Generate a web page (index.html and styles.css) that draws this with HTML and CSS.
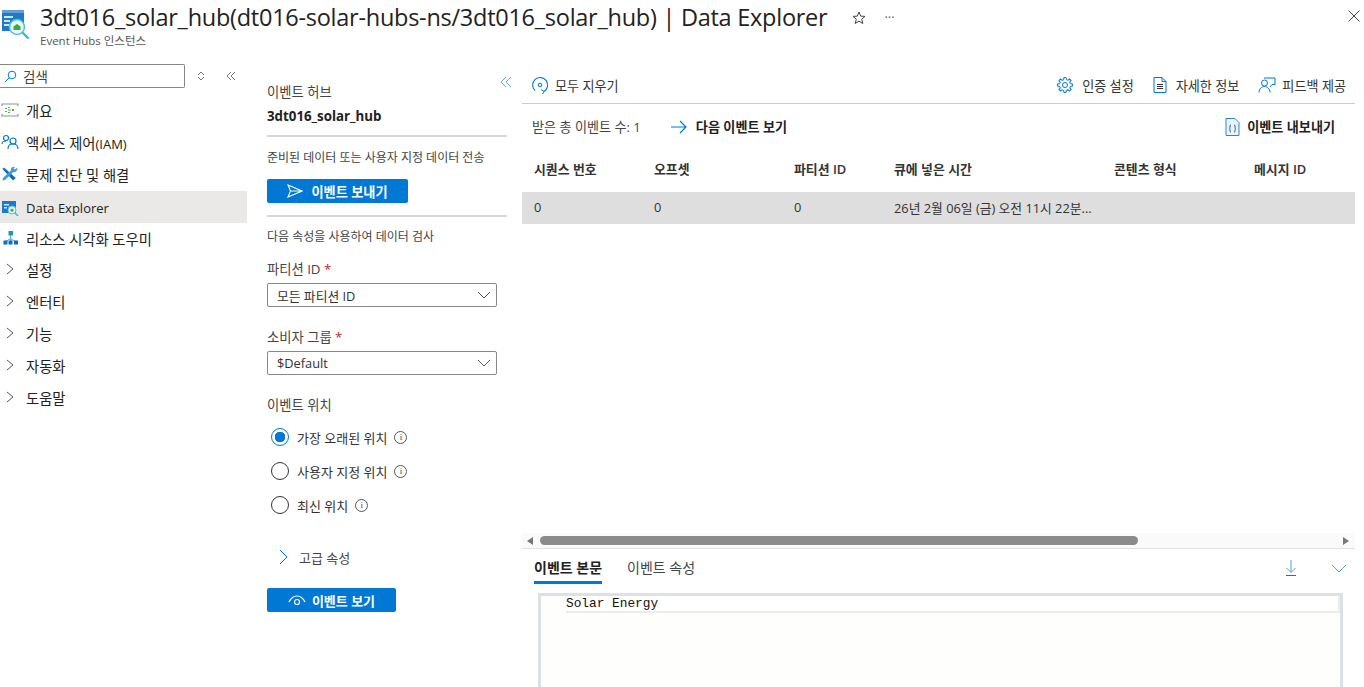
FILE: index.html
```html
<!DOCTYPE html>
<html lang="ko">
<head>
<meta charset="utf-8">
<title>Data Explorer</title>
<link rel="stylesheet" href="styles.css">
</head>
<body>
<div class="app">
  <header class="top">
    <svg class="logo" width="30" height="34" viewBox="0 0 30 34">
      <rect x="2" y="4" width="22" height="21" fill="#1f78c8"/>
      <rect x="2" y="4" width="22" height="3" fill="#5ea0d8"/>
      <rect x="4" y="10" width="9" height="2" fill="#cfe6f8"/>
      <rect x="4" y="14" width="6" height="2" fill="#cfe6f8"/>
      <rect x="4" y="18" width="6" height="2" fill="#cfe6f8"/>
      <circle cx="17" cy="21" r="7.500" fill="#e9f6fb" stroke="#50c0e0" stroke-width="1.500"/>
      <path d="M13.500 24v-3.500l3.500-2.500 3.500 2.500V24z" fill="#3fa83f"/>
      <path d="M22.500 26.500l6 6" stroke="#38b5d8" stroke-width="2.400"/>
    </svg>
    <div class="titles">
      <h1 class="title">3dt016_solar_hub(dt016-solar-hubs-ns/3dt016_solar_hub) | Data Explorer</h1>
      <div class="subtitle">Event Hubs 인스턴스</div>
    </div>
    <svg class="star" width="14" height="14" viewBox="0 0 14 14"><path d="M7 1l1.700 4.100 4.300.3-3.300 2.800 1.100 4.300L7 10.200l-3.800 2.300 1.100-4.300L1 5.400l4.300-.3z" fill="none" stroke="#444" stroke-width="1"/></svg>
    <div class="more">···</div>
    <svg class="close" width="14" height="14" viewBox="0 0 14 14"><path d="M1.500 1.500l11 11M12.500 1.500l-11 11" stroke="#444" stroke-width="1"/></svg>
  </header>
  <div class="body">
    <nav class="side">
      <div class="searchrow">
        <div class="search">
          <svg width="13" height="13" viewBox="0 0 13 13"><circle cx="8" cy="5" r="3.800" fill="none" stroke="#0078d4"/><path d="M5.200 7.800L1 12" stroke="#0078d4"/></svg>
          <span>검색</span>
        </div>
        <svg class="updown" width="8" height="10" viewBox="0 0 8 10"><path d="M1 4l3-3 3 3M1 6l3 3 3-3" fill="none" stroke="#777"/></svg>
        <svg class="coll" width="10" height="10" viewBox="0 0 10 10"><path d="M5 1L1 5l4 4M9 1L5 5l4 4" fill="none" stroke="#777"/></svg>
      </div>
      <ul class="menu">
        <li class="item"><svg class="ico" width="18" height="14" viewBox="0 0 18 14"><path d="M1 3V1h16v2M1 11v2h16v-2" fill="none" stroke="#8a9a8a" stroke-width="1.200"/><path d="M4 5h2v1H4zM4 8h2v1H4zM7 4h2v1H7zM7 6.500h3v1H7zM7 9h2v1H7zM11 6h2v2h-2z" fill="#5db04a"/></svg><span>개요</span></li>
        <li class="item"><svg class="ico" width="18" height="16" viewBox="0 0 18 16"><circle cx="5" cy="4" r="2.500" fill="none" stroke="#0078d4" stroke-width="1.200"/><path d="M1 10c0-2 2-3 4-3" fill="none" stroke="#0078d4" stroke-width="1.200"/><circle cx="12" cy="7" r="3" fill="none" stroke="#0078d4" stroke-width="1.200"/><path d="M7 15c0-3 2-5 5-5s5 2 5 5" fill="none" stroke="#0078d4" stroke-width="1.200"/></svg><span>액세스 제어<small class="lat">(IAM)</small></span></li>
        <li class="item"><svg class="ico" width="18" height="16" viewBox="0 0 18 16"><path d="M3 1.500L1.500 3l10.500 11.500 2.800-2.500z" fill="#0a6fb8"/><path d="M16.500 1.500l-2.500 2-1.500-1L14 .8c-2.500-.6-4.500 1-4 3.500L2 12l-.5 2.500 2.500-.5 8-7.800c2.500.5 4.500-1.700 4.500-4.700z" fill="#3d9bd6"/></svg><span>문제 진단 및 해결</span></li>
        <li class="item active"><svg class="ico" width="18" height="16" viewBox="0 0 18 16"><rect x="1" y="1" width="14" height="12" fill="#1f78c8"/><rect x="3" y="4" width="5" height="1.500" fill="#cfe6f8"/><rect x="3" y="7" width="3" height="1.500" fill="#cfe6f8"/><circle cx="11" cy="10" r="4" fill="#e9f6fb" stroke="#50c0e0"/><path d="M9.500 11.500v-2l1.500-1 1.500 1v2z" fill="#3fa83f"/><path d="M14 13l3 3" stroke="#38b5d8" stroke-width="1.400"/></svg><span class="lat">Data Explorer</span></li>
        <li class="item"><svg class="ico" width="18" height="16" viewBox="0 0 18 16"><path d="M9.500 4v7M4 12l5.500-3.500L15 12" fill="none" stroke="#5ea0d8"/><rect x="7.500" y="1" width="4.500" height="4.500" fill="#1d9aa6"/><rect x="2.500" y="10.500" width="4" height="4" fill="#0a6fb8"/><rect x="7.500" y="10.500" width="4" height="4" fill="#0a6fb8"/><rect x="13" y="10.500" width="4" height="4" fill="#0a6fb8"/></svg><span>리소스 시각화 도우미</span></li>
        <li class="item group first"><svg class="chev" width="8" height="12" viewBox="0 0 8 12"><path d="M1 1l6 5-6 5" fill="none" stroke="#555"/></svg><span>설정</span></li>
        <li class="item group"><svg class="chev" width="8" height="12" viewBox="0 0 8 12"><path d="M1 1l6 5-6 5" fill="none" stroke="#555"/></svg><span>엔터티</span></li>
        <li class="item group"><svg class="chev" width="8" height="12" viewBox="0 0 8 12"><path d="M1 1l6 5-6 5" fill="none" stroke="#555"/></svg><span>기능</span></li>
        <li class="item group"><svg class="chev" width="8" height="12" viewBox="0 0 8 12"><path d="M1 1l6 5-6 5" fill="none" stroke="#555"/></svg><span>자동화</span></li>
        <li class="item group"><svg class="chev" width="8" height="12" viewBox="0 0 8 12"><path d="M1 1l6 5-6 5" fill="none" stroke="#555"/></svg><span>도움말</span></li>
      </ul>
    </nav>
    <section class="panel">
      <svg class="panelcoll" width="12" height="12" viewBox="0 0 12 12"><path d="M6 1L1 6l5 5M11 1L6 6l5 5" fill="none" stroke="#62aee8"/></svg>
      <div class="lbl hub">이벤트 허브</div>
      <div class="hubname">3dt016_solar_hub</div>
      <div class="rule"></div>
      <div class="lbl desc">준비된 데이터 또는 사용자 지정 데이터 전송</div>
      <button class="btn send"><svg width="16" height="14" viewBox="0 0 16 14"><path d="M1 1l14 6-14 6 2.500-6zM3.500 7H15" fill="none" stroke="#fff" stroke-width="1.100"/></svg><span>이벤트 보내기</span></button>
      <div class="rule rule2"></div>
      <div class="lbl desc2">다음 속성을 사용하여 데이터 검사</div>
      <div class="lbl field">파티션 ID <em>*</em></div>
      <div class="select"><span>모든 파티션 ID</span><svg width="14" height="8" viewBox="0 0 14 8"><path d="M1 1l6 6 6-6" fill="none" stroke="#555"/></svg></div>
      <div class="lbl field f2">소비자 그룹 <em>*</em></div>
      <div class="select s2"><span>$Default</span><svg width="14" height="8" viewBox="0 0 14 8"><path d="M1 1l6 6 6-6" fill="none" stroke="#555"/></svg></div>
      <div class="lbl field f3">이벤트 위치</div>
      <div class="radios">
        <div class="radio"><i class="dot on"></i><span>가장 오래된 위치</span><i class="inf">i</i></div>
        <div class="radio"><i class="dot"></i><span>사용자 지정 위치</span><i class="inf">i</i></div>
        <div class="radio"><i class="dot"></i><span>최신 위치</span><i class="inf">i</i></div>
      </div>
      <div class="adv"><svg width="10" height="16" viewBox="0 0 10 16"><path d="M1 1l7 7-7 7" fill="none" stroke="#0078d4"/></svg><span>고급 속성</span></div>
      <button class="btn view"><svg width="18" height="11" viewBox="0 0 18 11"><path d="M1 7c2-4 5-6 8-6s6 2 8 6" fill="none" stroke="#fff" stroke-width="1.200"/><circle cx="9" cy="7" r="2.500" fill="none" stroke="#fff" stroke-width="1.200"/></svg><span>이벤트 보기</span></button>
    </section>
    <main class="main">
      <div class="toolbar">
        <div class="tool clear"><svg width="18" height="18" viewBox="0 0 18 18"><path d="M4 14.500A7.500 7.500 0 1 1 13 15.500" fill="none" stroke="#0078d4" stroke-width="1.100"/><circle cx="9" cy="9" r="1.800" fill="none" stroke="#0078d4"/><path d="M10 13.500l3 2-1.500 2.500" fill="none" stroke="#0078d4"/></svg><span>모두 지우기</span></div>
        <div class="tools">
          <div class="tool"><svg width="16" height="16" viewBox="-8 -8 16 16"><defs><path id="cog" d="M5.340-1.330L7.410-1.170V1.170L5.340 1.330A5.500 5.500 0 0 1 4.710 2.830" fill="none" stroke="#0078d4"/></defs><use href="#cog"/><use href="#cog" transform="rotate(45)"/><use href="#cog" transform="rotate(90)"/><use href="#cog" transform="rotate(135)"/><use href="#cog" transform="rotate(180)"/><use href="#cog" transform="rotate(225)"/><use href="#cog" transform="rotate(270)"/><use href="#cog" transform="rotate(315)"/><circle r="2.500" fill="none" stroke="#0078d4"/></svg><span>인증 설정</span></div>
          <div class="tool"><svg width="14" height="16" viewBox="0 0 14 16"><path d="M1 .5h8l4 4v11H1z" fill="none" stroke="#0078d4"/><path d="M9 .5v4h4" fill="none" stroke="#0078d4"/><path d="M4 7.500h6M4 9.500h6M4 11.500h6" stroke="#333"/></svg><span>자세한 정보</span></div>
          <div class="tool fb"><svg width="18" height="16" viewBox="0 0 18 16"><circle cx="6.500" cy="6" r="3" fill="none" stroke="#0078d4"/><path d="M1 15.500c0-3.500 2.500-6 5.500-6s5.500 2.500 5.500 6" fill="none" stroke="#0078d4"/><path d="M6 1h11v6.500h-3L12 10" fill="none" stroke="#0078d4"/></svg><span>피드백 제공</span></div>
        </div>
      </div>
      <div class="status">
        <span class="count">받은 총 이벤트 수: 1</span>
        <div class="next"><svg width="18" height="14" viewBox="0 0 18 14"><path d="M1 7h15M10 1l6 6-6 6" fill="none" stroke="#0078d4" stroke-width="1.200"/></svg><b>다음 이벤트 보기</b></div>
        <div class="export"><svg width="15" height="18" viewBox="0 0 15 18"><path d="M1 .5h9l4 4v13H1z" fill="#eaf4fc" stroke="#2b88d8"/><path d="M6 7c-1.500 0-1 2-1 2.500S4.500 11 4.500 11s.5.500.5 1.500 0 1.500 1 1.500M9 7c1.500 0 1 2 1 2.500s.5 1.500.5 1.500-.5.500-.5 1.500 0 1.500-1 1.500" fill="none" stroke="#0a5a9c"/></svg><b>이벤트 내보내기</b></div>
      </div>
      <div class="cols head"><span>시퀀스 번호</span><span>오프셋</span><span>파티션 ID</span><span>큐에 넣은 시간</span><span>콘텐츠 형식</span><span>메시지 ID</span></div>
      <div class="cols row"><span>0</span><span>0</span><span>0</span><span>26년 2월 06일 (금) 오전 11시 22분...</span><span></span><span></span></div>
      <div class="spacer"></div>
      <div class="hscroll">
        <svg width="6" height="8" viewBox="0 0 6 8"><path d="M6 0v8L0 4z" fill="#777"/></svg>
        <div class="track"><div class="thumb"></div></div>
        <svg width="6" height="8" viewBox="0 0 6 8"><path d="M0 0v8l6-4z" fill="#777"/></svg>
      </div>
      <div class="tabs">
        <div class="tab on">이벤트 본문</div>
        <div class="tab">이벤트 속성</div>
        <svg class="dl" width="12" height="17" viewBox="0 0 12 17"><path d="M6 0v12M1.500 8L6 12.500 10.500 8" fill="none" stroke="#4ba3e6"/><path d="M1 15.500h10" stroke="#0078d4"/></svg>
        <svg class="dn" width="16" height="9" viewBox="0 0 16 9"><path d="M1 1l7 7 7-7" fill="none" stroke="#4ba3e6"/></svg>
      </div>
      <div class="editor"><div class="line">Solar Energy</div></div>
    </main>
  </div>
</div>
</body>
</html>
```
FILE: styles.css
```css
* { box-sizing: border-box; }
html, body { margin: 0; height: 100%; background: #fff; overflow: hidden; }
body { font-family: "Open Sans", "Noto Sans CJK KR", sans-serif; font-size: 13px; color: #333; }
.app { height: 687px; display: flex; flex-direction: column; }
.top { height: 60px; display: flex; align-items: flex-start; position: relative; flex: none; }
.logo { margin: 6px 10px 0 0; flex: none; }
.title { margin: 2px 0 0; font-size: 23.500px; font-weight: 400; line-height: 30px; color: #222; letter-spacing: -.26px; white-space: nowrap; }
.subtitle { font-size: 11.500px; line-height: 16px; color: #555; margin-top: 1px; }
.star { margin: 11px 0 0 25px; }
.more { margin: 8px 0 0 18px; color: #666; font-size: 13px; }
.close { position: absolute; right: 3px; top: 9px; }
.body { flex: 1; display: flex; min-height: 0; }
.side { width: 247px; flex: none; padding-top: 4px; }
.searchrow { display: flex; align-items: center; height: 24px; }
.search { width: 185px; height: 24px; border: 1px solid #8a8886; border-left: 0; border-radius: 0 2px 2px 0; display: flex; align-items: center; gap: 6px; padding-left: 4px; color: #444; font-size: 13.500px; }
.updown { margin-left: 12px; }
.coll { margin-left: 21px; }
.menu { list-style: none; margin: 7px 0 0; padding: 0; }
.item { height: 32px; display: flex; align-items: center; gap: 7px; padding: 0 0 2px 1px; color: #222; white-space: nowrap; font-size: 14.300px; }
.item .lat { font-size: 13px; }
.item.active { background: #ebe9e8; font-weight: 500; padding: 2px 0 0 1px; }
.ico { flex: none; }
.group { padding: 0 0 0 6px; gap: 12px; }
.first { margin-top: -2px; }
.chev { flex: none; }
.panel { width: 275px; flex: none; padding: 23px 15px 0 20px; position: relative; }
.panelcoll { position: absolute; right: 10px; top: 16px; }
.lbl { color: #444; line-height: 18px; font-size: 13.300px; }
.hubname { font-weight: 700; margin-top: 6px; line-height: 18px; color: #222; font-size: 13.300px; }
.rule { height: 2px; background: #d5d9dd; margin-top: 10px; }
.desc { margin-top: 12px; font-size: 12px; }
.btn { display: flex; align-items: center; justify-content: center; gap: 8px; height: 24px; background: #0078d4; border: 0; border-radius: 2px; color: #fff; font: inherit; font-weight: 700; padding: 0; }
.send { width: 141px; margin-top: 12px; font-size: 13.200px; }
.rule2 { margin-top: 12px; }
.desc2 { margin-top: 11px; font-size: 12px; }
.field { margin-top: 14px; }
.field em { color: #c4262e; font-style: normal; }
.select { height: 24px; margin-top: 5px; width: 230px; border: 1px solid #8a8886; border-radius: 2px; padding: 0 5px 0 9px; display: flex; align-items: center; justify-content: space-between; color: #333; font-size: 12.800px; }
.s2 { margin-top: 5px; }
.f2 { margin-top: 21px; }
.f3 { margin-top: 21px; }
.radios { margin-top: 13px; padding-left: 4px; display: flex; flex-direction: column; gap: 14px; }
.radio { height: 20px; display: flex; align-items: center; }
.dot { width: 18px; height: 18px; border: 1.500px solid #333; border-radius: 50%; margin-right: 8px; flex: none; }
.dot.on { border-color: #0078d4; background: radial-gradient(circle, #0078d4 0 5px, #fff 5.500px); }
.inf { width: 13px; height: 13px; border: 1px solid #555; border-radius: 50%; margin-left: 7px; font: 9px/11px "Liberation Serif", serif; text-align: center; color: #444; }
.adv { display: flex; align-items: center; gap: 10px; margin-top: 33px; padding-left: 12px; color: #444; height: 18px; }
.view { width: 129px; margin-top: 22px; gap: 6px; }
.main { flex: 1; display: flex; flex-direction: column; min-width: 0; padding-right: 9px; }
.toolbar { flex: none; height: 44px; padding: 7px 9px 0 9px; border-bottom: 1px solid #ccc; display: flex; justify-content: space-between; align-items: center; }
.tools { display: flex; gap: 19px; }
.tool { display: flex; align-items: center; gap: 9px; color: #333; white-space: nowrap; font-size: 13.100px; }
.clear { gap: 6px; }
.fb { gap: 6px; }
.status { flex: none; height: 47px; display: flex; align-items: center; padding: 0 20px 2px 10px; }
.count { color: #444; font-size: 13.100px; }
.next { display: flex; align-items: center; gap: 8px; margin-left: 29px; color: #222; }
.next b, .export b { font-size: 13.100px; }
.export { display: flex; align-items: center; gap: 7px; margin-left: auto; color: #222; }
.cols { display: grid; grid-template-columns: 120px 140px 100px 220px 140px 1fr; padding-left: 12px; flex: none; align-items: center; }
.head { height: 41px; font-weight: 600; color: #333; font-size: 12.900px; padding-bottom: 6px; }
.row { height: 32px; background: #dedede; color: #333; font-size: 12.800px; padding-bottom: 2px; }
.spacer { flex: 1; }
.hscroll { flex: none; height: 16px; background: #fafafa; display: flex; align-items: center; gap: 7px; padding: 0 6px 0 5px; border-bottom: 1px solid #e0e0e0; }
.track { flex: 1; height: 9px; }
.thumb { width: 598px; height: 9px; border-radius: 5px; background: #8b8b8b; }
.tabs { flex: none; height: 44px; display: flex; align-items: flex-start; padding: 8px 0 0 12px; gap: 25px; }
.tab { height: 27px; padding-top: 1px; line-height: 20px; color: #444; font-size: 14px; }
.tab.on { color: #222; font-weight: 600; border-bottom: 3px solid #0078d4; }
.dl { margin: 3px 0 0 auto; }
.dn { margin: 7px 8px 0 9px; flex: none; }
.editor { flex: none; height: 94px; margin: 0 12px 0 16px; border: solid #dde1e6; border-width: 3px 3px 0 3px; background: #fefefd; padding-left: 25px; }
.line { height: 17px; margin-top: 0; border: solid #ececec; border-width: 0 2px 2px 0; background: #fff; font: 12.800px/16px "Liberation Mono", monospace; color: #111; }
```
